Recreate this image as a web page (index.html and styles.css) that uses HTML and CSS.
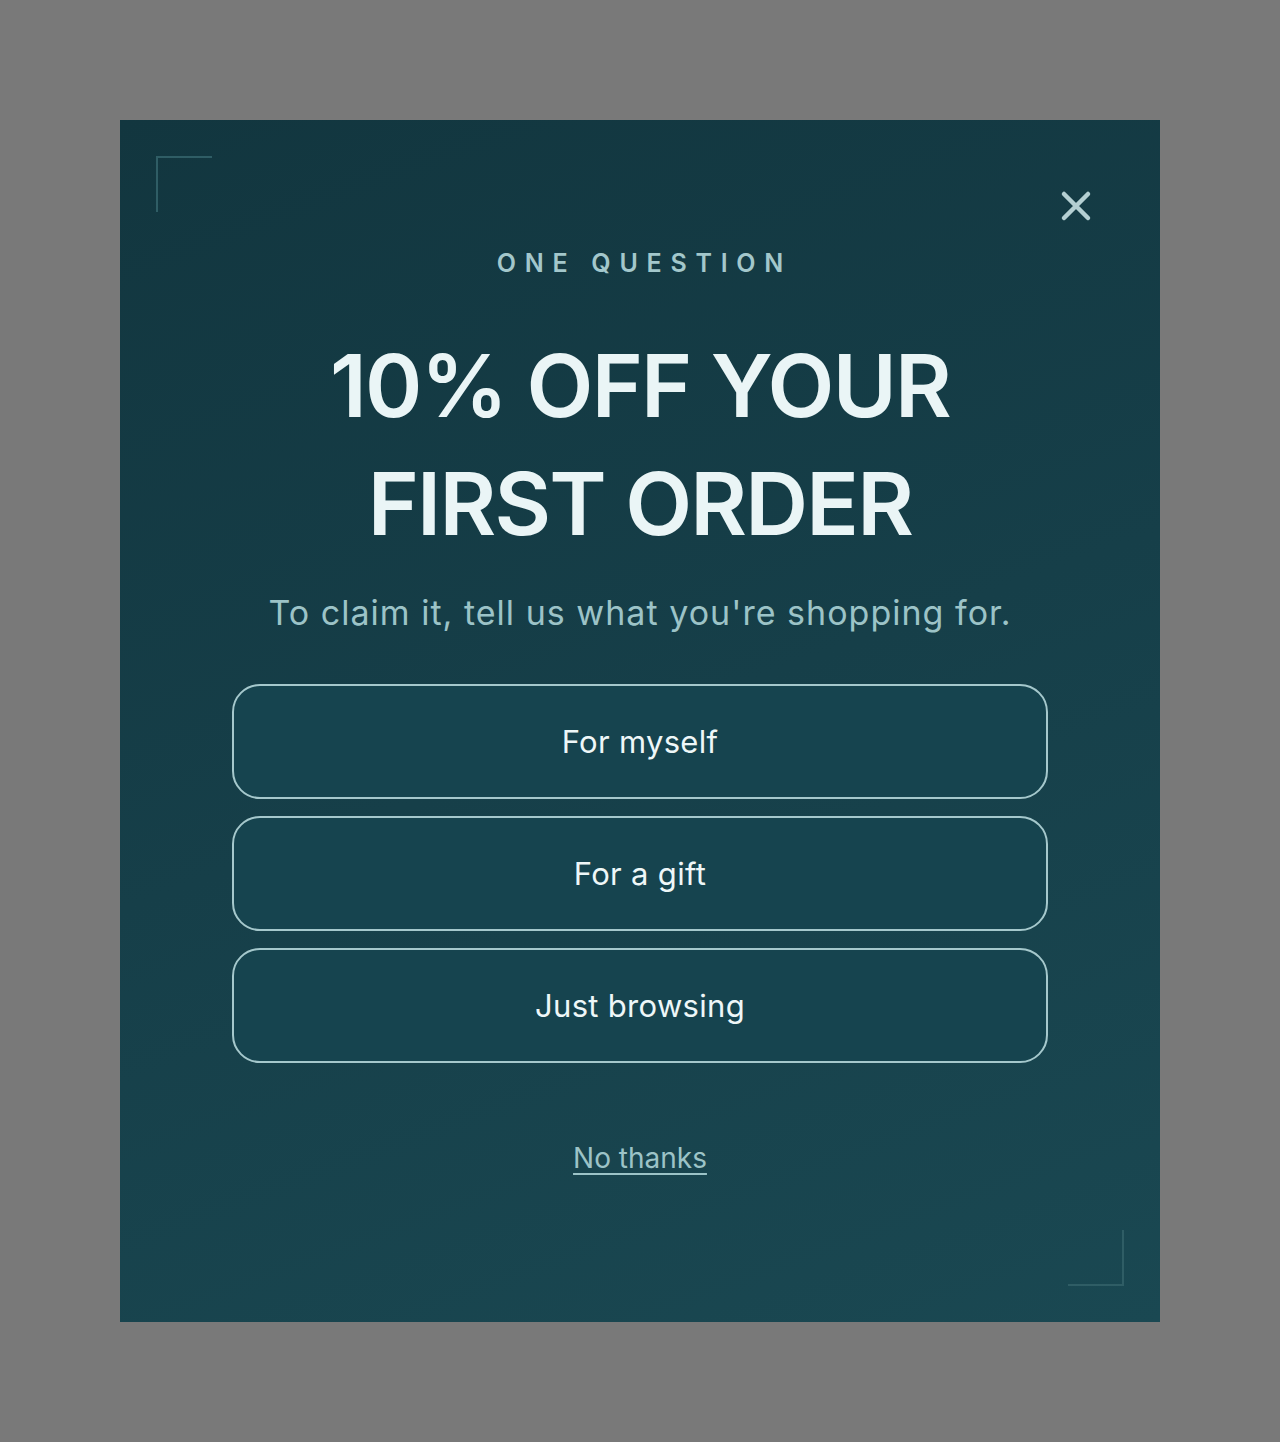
FILE: index.html
```html
<!DOCTYPE html>
<html lang="en">
  <head>
    <meta charset="UTF-8" />
    <meta name="viewport" content="width=device-width, initial-scale=1.0" />
    <title>One Question - 10% Off</title>
    <link rel="stylesheet" href="styles.css">
  </head>
  <body>
    <div class="modal">
      <span class="corner corner-tl"></span>
      <span class="corner corner-br"></span>

      <button class="close-btn" aria-label="Close">
        <svg width="32" height="32" viewBox="0 0 32 32">
          <path d="M4 4 L28 28 M28 4 L4 28" stroke="currentColor" stroke-width="4.5" stroke-linecap="round" fill="none" />
        </svg>
      </button>

      <p class="eyebrow">One Question</p>
      <h1>10% OFF YOUR<br />FIRST ORDER</h1>
      <p class="subtitle">To claim it, tell us what you're shopping for.</p>

      <div class="options">
        <button class="option">For myself</button>
        <button class="option">For a gift</button>
        <button class="option">Just browsing</button>
      </div>

      <a href="#" class="no-thanks">No thanks</a>
    </div>
  </body>
</html>
```

FILE: styles.css
```css
/* Fond de page */
body {
  font-family: "Inter", "Noto Sans", sans-serif;
  background-color: #797979;
  margin: 0;
  padding: 0;
}

/* Fenêtre principale */
.modal {
  position: relative;
  box-sizing: border-box;
  width: 1040px;
  height: 1202px;
  margin: 120px auto 0;
  padding: 128px 112px 0;
  background: linear-gradient(160deg, #12363f 0%, #163f49 50%, #1a4852 100%);
  text-align: center;
  display: flex;
  flex-direction: column;
  align-items: center;
}

/* Coins décoratifs */
.corner {
  position: absolute;
  width: 54px;
  height: 54px;
  border-color: #2f5d65;
  border-style: solid;
  border-width: 0;
}

.corner-tl {
  top: 36px;
  left: 36px;
  border-top-width: 2px;
  border-left-width: 2px;
}

.corner-br {
  bottom: 36px;
  right: 36px;
  border-bottom-width: 2px;
  border-right-width: 2px;
}

/* Bouton fermer */
.close-btn {
  position: absolute;
  top: 70px;
  right: 68px;
  width: 32px;
  height: 32px;
  padding: 0;
  border: none;
  background: none;
  color: #b4cfd2;
  cursor: pointer;
}

.close-btn svg {
  display: block;
}

/* Sur-titre */
.eyebrow {
  margin: 0;
  font-size: 25px;
  line-height: 30px;
  font-weight: 600;
  letter-spacing: 0.35em;
  text-transform: uppercase;
  color: #a3c7cb;
  padding-left: 0.35em;
}

/* Titre principal */
h1 {
  margin: 49px 0 0;
  font-size: 87px;
  line-height: 118px;
  font-weight: 600;
  letter-spacing: -0.02em;
  color: #eaf5f6;
}

.subtitle {
  margin: 30px 0 0;
  font-size: 34px;
  line-height: 40px;
  color: #9cc3c7;
  letter-spacing: 0.03em;
}

/* Choix */
.options {
  margin-top: 51px;
  width: 816px;
  display: flex;
  flex-direction: column;
  gap: 17px;
}

.option {
  height: 115px;
  border: 2px solid #a5c8cc;
  border-radius: 28px;
  background-color: #16444f;
  color: #eef7f8;
  font-family: inherit;
  font-size: 31px;
  font-weight: 400;
  letter-spacing: 0.01em;
  cursor: pointer;
  transition: background-color 0.3s;
}

.option:hover {
  background-color: #1c5260;
}

/* Lien refus */
.no-thanks {
  margin-top: 79px;
  font-size: 28px;
  line-height: 32px;
  color: #9cc3c7;
  text-decoration: underline;
  text-underline-offset: 5px;
  text-decoration-thickness: 2px;
}
```
